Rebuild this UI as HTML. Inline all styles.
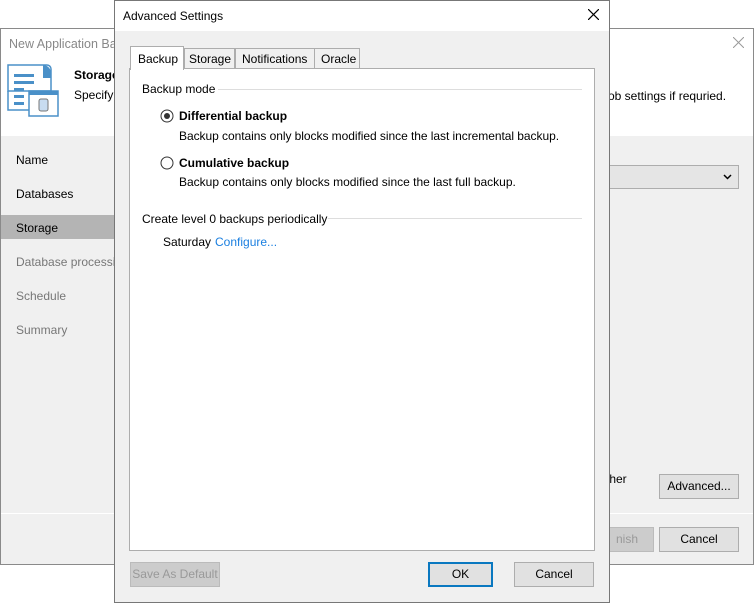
<!DOCTYPE html>
<html><head><meta charset="utf-8"><style>
*{margin:0;padding:0;box-sizing:border-box}
body{width:754px;height:603px;background:#fff;position:relative;overflow:hidden;font-family:"Liberation Sans",sans-serif;font-size:12px;color:#000}
.a{position:absolute;white-space:nowrap}
.btn{position:absolute;background:#e1e1e1;border:1px solid #adadad;text-align:center;line-height:22px;font-size:12px}
</style></head><body>
<div class="a" style="left:0;top:28px;width:754px;height:537px;border:1px solid #8a8a8a;background:#f0f0f0"></div>
<div class="a" style="left:1px;top:29px;width:752px;height:107px;background:#fff"></div>
<div class="a" style="left:9px;top:37px;color:#888;font-size:12.5px">New Application Ba</div>
<svg class="a" style="left:733px;top:37px" width="11" height="11"><path d="M0 0L11 11M11 0L0 11" stroke="#999" stroke-width="1"/></svg>
<svg class="a" style="left:7px;top:64px" width="54" height="54" viewBox="0 0 54 54">
<path d="M1 1H40a4 4 0 0 1 4 4V27H1Z" fill="#fff" stroke="#4a90c8" stroke-width="1.5"/>
<path d="M36 1a8 8 0 0 1 8 8V14H36Z" fill="#4a90c8"/>
<rect x="7" y="10" width="20" height="3" fill="#4a90c8"/><rect x="7" y="17" width="20" height="3" fill="#4a90c8"/>
<rect x="7" y="24" width="10" height="3" fill="#4a90c8"/><rect x="7" y="31" width="10" height="3" fill="#4a90c8"/><rect x="7" y="38" width="10" height="3" fill="#4a90c8"/>
<path d="M1 27V46H22" fill="none" stroke="#4a90c8" stroke-width="1.5"/>
<rect x="22" y="27" width="29" height="25" fill="#fff" stroke="#4a90c8" stroke-width="1.5"/>
<rect x="22" y="27" width="29" height="4" fill="#4a90c8"/>
<rect x="32" y="35" width="9" height="12" rx="2" fill="#c8dcf0" stroke="#777"/>
</svg>
<div class="a" style="left:74px;top:68px;font-weight:bold">Storage</div>
<div class="a" style="left:74px;top:88px">Specify</div>
<div class="a" style="left:608px;top:89px">ob settings if requried.</div>
<div class="a" style="left:1px;top:215px;width:113px;height:24px;background:#b4b4b4"></div>
<div class="a" style="left:16px;top:153px">Name</div>
<div class="a" style="left:16px;top:187px">Databases</div>
<div class="a" style="left:16px;top:221px">Storage</div>
<div class="a" style="left:16px;top:255px;color:#777">Database processing</div>
<div class="a" style="left:16px;top:289px;color:#777">Schedule</div>
<div class="a" style="left:16px;top:323px;color:#777">Summary</div>
<div class="a" style="left:600px;top:165px;width:139px;height:24px;background:#e5e5e5;border:1px solid #adadad"></div>
<svg class="a" style="left:723px;top:174px" width="9" height="6"><path d="M1 1L4.5 4.5L8 1" fill="none" stroke="#000" stroke-width="1.5"/></svg>
<div class="a" style="left:606px;top:472px">ther</div>
<div class="btn" style="left:659px;top:474px;width:80px;height:25px">Advanced...</div>
<div class="a" style="left:1px;top:513px;width:752px;height:1px;background:#fff"></div>
<div class="btn" style="left:600px;top:527px;width:54px;height:25px;background:#ccc;border-color:#bbb;color:#999">nish</div>
<div class="btn" style="left:659px;top:527px;width:80px;height:25px">Cancel</div>
<div class="a" style="left:114px;top:0;width:496px;height:603px;border:1px solid #777;background:#f0f0f0"></div>
<div class="a" style="left:115px;top:1px;width:494px;height:30px;background:#fff"></div>
<div class="a" style="left:123px;top:9px">Advanced Settings</div>
<svg class="a" style="left:588px;top:9px" width="11" height="11"><path d="M0 0L11 11M11 0L0 11" stroke="#000" stroke-width="1.2"/></svg>
<div class="a" style="left:129px;top:68px;width:466px;height:483px;background:#fff;border:1px solid #adadad"></div>
<div class="a" style="left:184px;top:48px;width:51px;height:21px;background:#f0f0f0;border:1px solid #adadad;padding:3px 0 0 4px">Storage</div>
<div class="a" style="left:235px;top:48px;width:80px;height:21px;background:#f0f0f0;border:1px solid #adadad;padding:3px 0 0 6px">Notifications</div>
<div class="a" style="left:314px;top:48px;width:46px;height:21px;background:#f0f0f0;border:1px solid #adadad;padding:3px 0 0 6px">Oracle</div>
<div class="a" style="left:130px;top:46px;width:54px;height:24px;background:#fff;border:1px solid #adadad;border-bottom:none;padding:5px 0 0 7px">Backup</div>
<div class="a" style="left:142px;top:82px">Backup mode</div>
<div class="a" style="left:218px;top:89px;width:364px;height:1px;background:#ddd"></div>
<svg class="a" style="left:160px;top:109px" width="14" height="14"><circle cx="7" cy="7" r="6" fill="#fff" stroke="#333"/><circle cx="7" cy="7" r="3" fill="#333"/></svg>
<div class="a" style="left:179px;top:109px;font-weight:bold">Differential backup</div>
<div class="a" style="left:179px;top:129px;letter-spacing:-0.05px">Backup contains only blocks modified since the last incremental backup.</div>
<svg class="a" style="left:160px;top:156px" width="14" height="14"><circle cx="7" cy="7" r="6" fill="#fff" stroke="#333"/></svg>
<div class="a" style="left:179px;top:156px;font-weight:bold">Cumulative backup</div>
<div class="a" style="left:179px;top:175px">Backup contains only blocks modified since the last full backup.</div>
<div class="a" style="left:142px;top:212px">Create level 0 backups periodically</div>
<div class="a" style="left:328px;top:218px;width:254px;height:1px;background:#ddd"></div>
<div class="a" style="left:163px;top:235px">Saturday</div>
<div class="a" style="left:215px;top:235px;color:#1a7fe0">Configure...</div>
<div class="btn" style="left:130px;top:562px;width:90px;height:25px;background:#ccc;border-color:#bbb;color:#999">Save As Default</div>
<div class="btn" style="left:428px;top:562px;width:65px;height:25px;border:2px solid #0a78c0;line-height:21px">OK</div>
<div class="btn" style="left:514px;top:562px;width:80px;height:25px">Cancel</div>
</body></html>
